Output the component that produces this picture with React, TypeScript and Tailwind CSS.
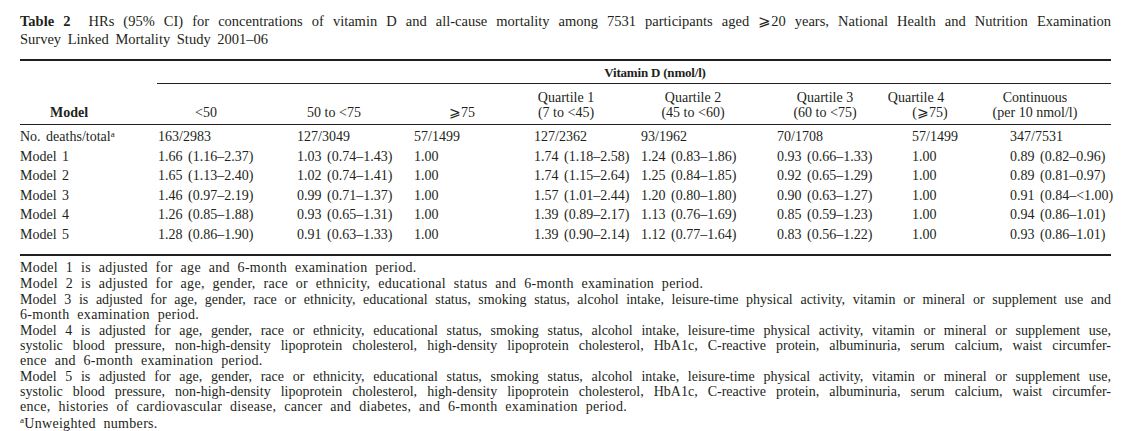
const serif = "font-['Liberation_Serif','DejaVu_Serif',serif]";

const headerCells: { top?: string; bottom: string; cls?: string; bottomCls?: string }[] = [
  { bottom: "<50" },
  { bottom: "50 to <75", cls: "pr-[10px]" },
  { bottom: "⩾75", cls: "pl-[32px]" },
  { top: "Quartile 1", bottom: "(7 to <45)", cls: "pl-[20px]" },
  { top: "Quartile 2", bottom: "(45 to <60)" },
  { top: "Quartile 3", bottom: "(60 to <75)" },
  { top: "Quartile 4", bottom: "(⩾75)", bottomCls: "pl-[28px]" },
  { top: "Continuous", bottom: "(per 10 nmol/l)" },
];

const rows: string[][] = [
  ["1.66 (1.16–2.37)", "1.03 (0.74–1.43)", "1.00", "1.74 (1.18–2.58)", "1.24 (0.83–1.86)", "0.93 (0.66–1.33)", "1.00", "0.89 (0.82–0.96)"],
  ["1.65 (1.13–2.40)", "1.02 (0.74–1.41)", "1.00", "1.74 (1.15–2.64)", "1.25 (0.84–1.85)", "0.92 (0.65–1.29)", "1.00", "0.89 (0.81–0.97)"],
  ["1.46 (0.97–2.19)", "0.99 (0.71–1.37)", "1.00", "1.57 (1.01–2.44)", "1.20 (0.80–1.80)", "0.90 (0.63–1.27)", "1.00", "0.91 (0.84–<1.00)"],
  ["1.26 (0.85–1.88)", "0.93 (0.65–1.31)", "1.00", "1.39 (0.89–2.17)", "1.13 (0.76–1.69)", "0.85 (0.59–1.23)", "1.00", "0.94 (0.86–1.01)"],
  ["1.28 (0.86–1.90)", "0.91 (0.63–1.33)", "1.00", "1.39 (0.90–2.14)", "1.12 (0.77–1.64)", "0.83 (0.56–1.22)", "1.00", "0.93 (0.86–1.01)"],
];

const deaths = ["163/2983", "127/3049", "57/1499", "127/2362", "93/1962", "70/1708", "57/1499", "347/7531"];

const notes: string[][] = [
  ["Model 1 is adjusted for age and 6-month examination period."],
  ["Model 2 is adjusted for age, gender, race or ethnicity, educational status and 6-month examination period."],
  [
    "Model 3 is adjusted for age, gender, race or ethnicity, educational status, smoking status, alcohol intake, leisure-time physical activity, vitamin or mineral or supplement use and",
    "6-month examination period.",
  ],
  [
    "Model 4 is adjusted for age, gender, race or ethnicity, educational status, smoking status, alcohol intake, leisure-time physical activity, vitamin or mineral or supplement use,",
    "systolic blood pressure, non-high-density lipoprotein cholesterol, high-density lipoprotein cholesterol, HbA1c, C-reactive protein, albuminuria, serum calcium, waist circumfer-",
    "ence and 6-month examination period.",
  ],
  [
    "Model 5 is adjusted for age, gender, race or ethnicity, educational status, smoking status, alcohol intake, leisure-time physical activity, vitamin or mineral or supplement use,",
    "systolic blood pressure, non-high-density lipoprotein cholesterol, high-density lipoprotein cholesterol, HbA1c, C-reactive protein, albuminuria, serum calcium, waist circumfer-",
    "ence, histories of cardiovascular disease, cancer and diabetes, and 6-month examination period.",
  ],
];

const dataCols = "grid grid-cols-[138px_139px_117px_120px_107px_136px_135px_98px_107px]";

function DataRow({ label, cells }: { label: React.ReactNode; cells: string[] }) {
  return (
    <div className={`${dataCols} h-[19.6px] items-center whitespace-nowrap [word-spacing:2px]`}>
      <div>{label}</div>
      {cells.map((c, i) => (
        <div key={i}>{c}</div>
      ))}
    </div>
  );
}

export default function App() {
  return (
    <div className={`${serif} w-[1131px] h-[431px] overflow-hidden bg-white px-[20px] text-[#231f20]`}>
      {/* caption */}
      <div className="pt-[12px] text-[14.5px] leading-[18px]">
        <p className="text-justify [text-align-last:justify]">
          <span className="font-bold">Table 2</span>&nbsp; HRs (95% CI) for concentrations of vitamin D and all-cause
          mortality among 7531 participants aged ⩾20 years, National Health and Nutrition Examination
        </p>
        <p className="[word-spacing:3px]">Survey Linked Mortality Study 2001–06</p>
      </div>

      <div className="mt-[11px] h-[2px] bg-[#231f20]" />

      {/* table */}
      <div className="text-[14px]">
        <div className="mt-[4px] ml-[137px] pl-[42px] text-center text-[13px] font-bold tracking-[-0.2px] leading-[16px]">
          Vitamin D (nmol/l)
        </div>
        <div className="mt-[2px] ml-[137px] h-[1px] bg-[#231f20]" />

        <div className="grid grid-cols-[98px_176px_90px_124px_96px_178px_86px_96px_142px] items-end pt-[6px] leading-[15px] whitespace-nowrap">
          <div className="text-center font-bold">Model</div>
          {headerCells.map((h, i) => (
            <div key={i} className={`flex flex-col items-center ${h.cls ?? ""}`}>
              {h.top && <span>{h.top}</span>}
              <span className={h.bottomCls}>{h.bottom}</span>
            </div>
          ))}
        </div>
        <div className="mt-[4px] h-[1px] bg-[#231f20]" />

        <div className="pt-[1px]">
          <DataRow
            label={
              <span>
                No. deaths/total<sup className="text-[9px]">a</sup>
              </span>
            }
            cells={deaths}
          />
          {rows.map((r, i) => (
            <DataRow key={i} label={`Model ${i + 1}`} cells={r} />
          ))}
        </div>
      </div>

      <div className="mt-[10px] h-[2px] bg-[#231f20]" />

      {/* footnotes */}
      <div className="mt-[4px] flex flex-col gap-[1.2px] text-[14px] leading-[15px]">
        {notes.map((lines, i) => (
          <div key={i}>
            {lines.map((l, j) =>
              j < lines.length - 1 ? (
                <p key={j} className="text-justify [text-align-last:justify]">
                  {l}
                </p>
              ) : (
                <p key={j} className="tracking-[0.3px] [word-spacing:4px]">
                  {l}
                </p>
              )
            )}
          </div>
        ))}
        <p className="tracking-[0.3px] [word-spacing:4px]">
          <sup className="text-[9px]">a</sup>Unweighted numbers.
        </p>
      </div>
    </div>
  );
}
